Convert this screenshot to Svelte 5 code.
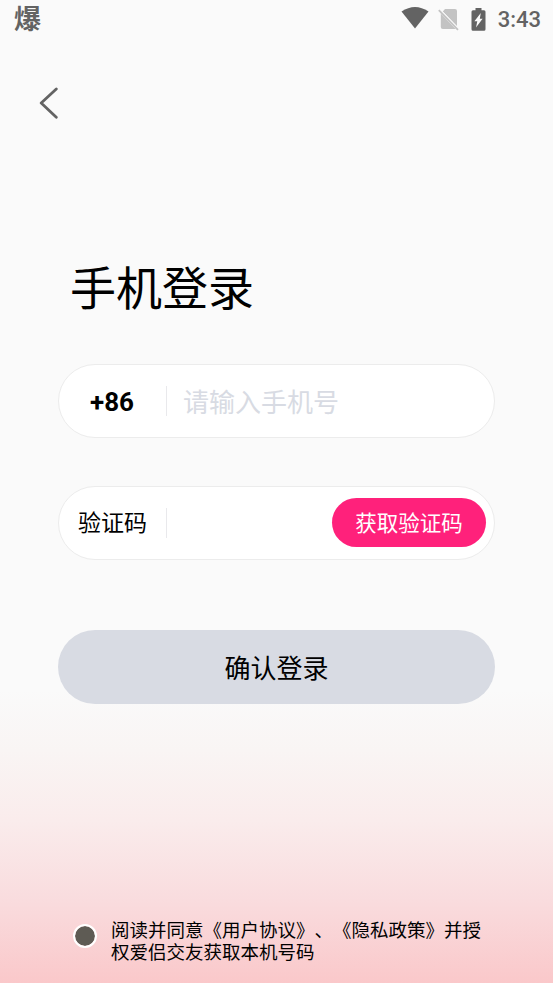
<script lang="ts">
	let phone = '';
	let code = '';
	let agreed = false;
</script>

<div class="page">
	<header class="status-bar">
		<span class="notice">爆</span>
		<div class="status-icons">
			<svg class="wifi" width="28" height="22" viewBox="0 0 28 22">
				<path d="M0.5 4.5Q14 -4.5 27.5 4.5L14 21.5Z" />
			</svg>
			<svg class="sim" width="21" height="23" viewBox="0 0 21 23">
				<path d="M7 1H17a2 2 0 0 1 2 2v15.200L4.800 3.400ZM2.800 5.600L17.600 20.900H4.800a2 2 0 0 1-2-2Z" />
				<path class="gap" d="M3 2.800L21 21.200" />
				<path class="slash" d="M0.800 2.200L20 21.800" />
			</svg>
			<svg class="battery" width="15" height="23" viewBox="0 0 15 23">
				<path fill-rule="evenodd" d="M4.500 0h6v2.200H13a1.500 1.500 0 0 1 1.500 1.500v17.500A1.500 1.500 0 0 1 13 22.700H2a1.500 1.500 0 0 1-1.500-1.500V3.700A1.500 1.500 0 0 1 2 2.200h2.500ZM9.800 5L3.400 13.300H6.300L5 19.500L11.600 10.800H8.800Z" />
			</svg>
			<span class="clock">3:43</span>
		</div>
	</header>

	<button class="back" aria-label="返回">
		<svg width="20" height="32" viewBox="0 0 20 32">
			<path d="M17.300 2L2.200 16L17.300 30.200" />
		</svg>
	</button>

	<main>
		<h1>手机登录</h1>

		<div class="field">
			<span class="prefix country">+86</span>
			<input type="tel" bind:value={phone} placeholder="请输入手机号" aria-label="手机号" />
		</div>

		<div class="field">
			<span class="prefix">验证码</span>
			<input type="text" bind:value={code} aria-label="验证码" />
			<button class="send">获取验证码</button>
		</div>

		<button class="submit">确认登录</button>
	</main>

	<footer>
		<button
			class="check"
			class:agreed
			role="checkbox"
			aria-checked={agreed}
			aria-label="同意"
			onclick={() => (agreed = !agreed)}
		></button>
		<p>阅读并同意《用户协议》、《隐私政策》并授权爱侣交友获取本机号码</p>
	</footer>
</div>

<style>
	:global(body) {
		margin: 0;
	}

	.page {
		box-sizing: border-box;
		display: flex;
		flex-direction: column;
		height: 983px;
		overflow: hidden;
		background: linear-gradient(#fafafa 0, #fafafa 690px, #f9f5f4 750px, #faecec 820px, #f9dcde 900px, #fac8ca 983px);
		color: #000;
		font-family: Roboto, 'Noto Sans CJK SC', sans-serif;
	}

	button {
		padding: 0;
		border: none;
		font-family: inherit;
		color: inherit;
	}

	.status-bar {
		display: flex;
		justify-content: space-between;
		height: 38px;
		padding: 0 13px 0 14px;
		color: #636363;
	}

	.notice {
		padding-top: 3px;
		font-size: 27px;
		font-weight: 700;
		line-height: 35px;
	}

	.status-icons {
		display: flex;
		align-items: center;
	}

	.status-icons svg {
		fill: #636363;
	}

	.wifi {
		margin: -2px 9px 0 0;
	}

	.status-icons .sim {
		margin-right: 12px;
		fill: #c3c3c3;
	}

	.slash {
		stroke: #c3c3c3;
		stroke-width: 1.8;
	}

	.gap {
		stroke: #fafafa;
		stroke-width: 1.5;
	}

	.battery {
		margin-right: 12px;
	}

	.clock {
		margin-right: -1px;
		padding-top: 1px;
		font-size: 22px;
		font-weight: 500;
		line-height: 37px;
	}

	.back {
		width: 20px;
		height: 32px;
		margin: 49px 0 0 39px;
		background: none;
	}

	.back svg {
		display: block;
		fill: none;
		stroke: #636363;
		stroke-width: 2.8;
		stroke-linecap: round;
		stroke-linejoin: round;
	}

	main {
		display: flex;
		flex-direction: column;
		margin: 136px 58px 0;
	}

	h1 {
		margin: 0 0 41px 12px;
		font-size: 46px;
		font-weight: 400;
		line-height: 68px;
	}

	.field {
		box-sizing: border-box;
		display: flex;
		align-items: center;
		height: 74px;
		margin-bottom: 48px;
		padding-right: 8px;
		border: 1.5px solid #ececec;
		border-radius: 37px;
		background: #fff;
	}

	.prefix {
		box-sizing: border-box;
		flex: none;
		width: 108px;
		height: 30px;
		padding-left: 19px;
		border-right: 1px solid #e9e9ec;
		font-size: 23px;
		line-height: 32px;
	}

	.country {
		padding-left: 31px;
		font-size: 26px;
		font-weight: 700;
		line-height: 33px;
	}

	input {
		box-sizing: border-box;
		flex: 1;
		min-width: 0;
		height: 44px;
		padding: 4px 0 0 16px;
		border: none;
		outline: none;
		background: none;
		font-family: inherit;
		font-size: 26px;
	}

	input::placeholder {
		color: #d8dbe3;
		opacity: 1;
	}

	.send {
		flex: none;
		width: 154px;
		height: 49px;
		margin-bottom: 1px;
		padding-bottom: 2px;
		border-radius: 25px;
		background: #ff217b;
		color: #fff;
		font-size: 21.5px;
	}

	.submit {
		height: 74px;
		margin-top: 22px;
		padding-bottom: 2px;
		border-radius: 37px;
		background: #d8dbe3;
		font-size: 26px;
	}

	footer {
		display: flex;
		align-items: flex-start;
		margin: 216px 70px 0 73px;
	}

	.check {
		box-sizing: border-box;
		flex: none;
		width: 24px;
		height: 24px;
		margin: 4px 14px 0 0;
		border: 2px solid #fff;
		border-radius: 50%;
		background: #5e5b54;
		background-clip: padding-box;
	}

	.check.agreed {
		background-color: #ff217b;
	}

	footer p {
		width: 374px;
		margin: 0;
		font-size: 18.5px;
		line-height: 22px;
		word-break: break-all;
		text-spacing-trim: space-all;
	}
</style>
